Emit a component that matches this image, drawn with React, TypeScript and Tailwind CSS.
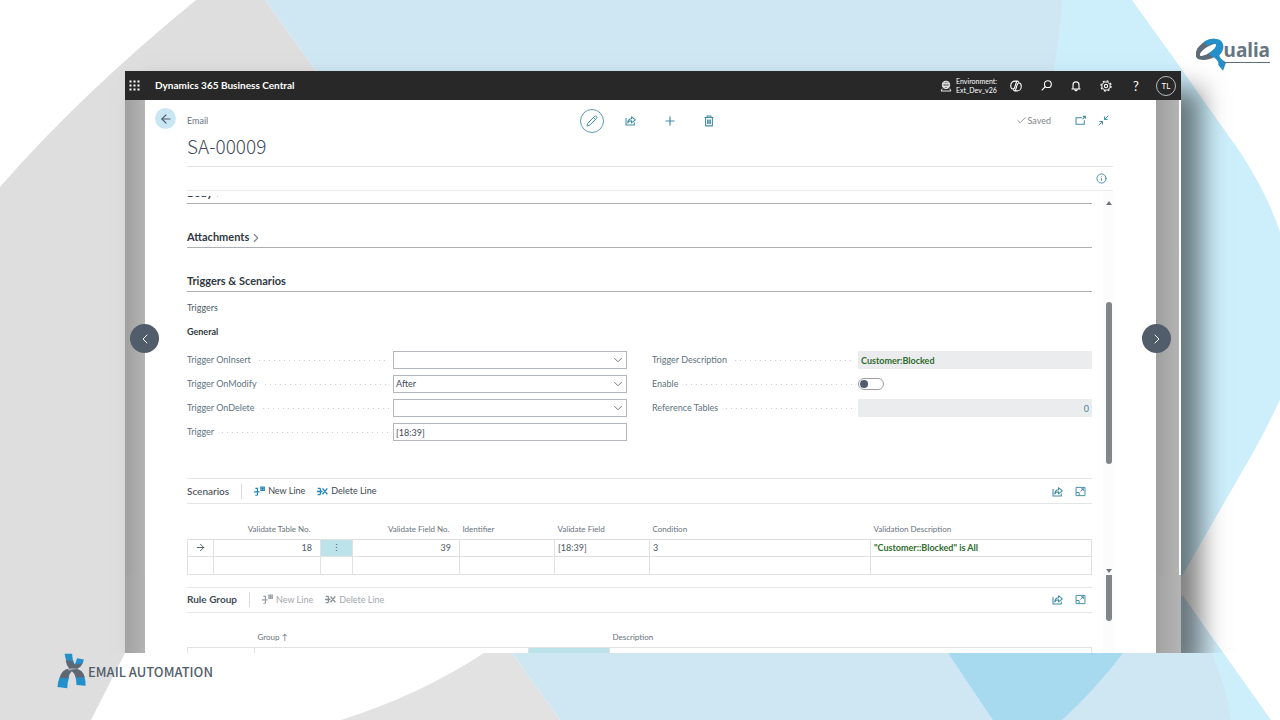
import React from "react";
import { ArrowLeft, ArrowRight, Check, ChevronDown, ChevronLeft, ChevronRight, Info, Pencil, Plus } from "lucide-react";

type IconProps = { className?: string };

const ShareIcon: React.FC<IconProps> = ({ className }) => (
  <svg viewBox="0 0 16 16" fill="none" stroke="currentColor" strokeWidth="1.5" className={className}>
    <path d="M1.500 4.500v10h12V11" />
    <path d="M4 11.500c.3-4 2.500-6 5.500-6V2.500l5.500 4.500-5.500 4.500V8.500c-2.500-.2-4.200 1-5.500 3z" strokeLinejoin="round" />
  </svg>
);

const TrashIcon: React.FC<IconProps> = ({ className }) => (
  <svg viewBox="0 0 16 16" fill="none" stroke="currentColor" strokeWidth="1.4" className={className}>
    <path d="M2 3.200h12M5.500 3V1.200h5V3M3.500 3.500v11h9v-11M6.200 6v6M8 6v6M9.800 6v6" />
  </svg>
);

const PopOutIcon: React.FC<IconProps> = ({ className }) => (
  <svg viewBox="0 0 16 16" fill="none" stroke="currentColor" strokeWidth="1.500" className={className}>
    <path d="M10 4H1.500v9.500h12V7.500M11 6l4-4M11.500 2h3.500v3.500" />
  </svg>
);

const CollapseIcon: React.FC<IconProps> = ({ className }) => (
  <svg viewBox="0 0 16 16" fill="none" stroke="currentColor" strokeWidth="1.400" className={className}>
    <path d="M15 1L9.500 6.500M9.500 2v4.500H14M1 15l5.500-5.500M2 9.500h4.500V14" />
  </svg>
);

const ExpandIcon: React.FC<IconProps> = ({ className }) => (
  <svg viewBox="0 0 16 16" fill="none" stroke="currentColor" strokeWidth="1.400" className={className}>
    <path d="M1.500 2h13v12h-13zM1.500 9.500H6V14M8 8l4-4M9 4h3.200v3.200" />
  </svg>
);

const NewLineIcon: React.FC<IconProps> = ({ className }) => (
  <svg viewBox="0 0 16 16" fill="none" stroke="currentColor" strokeWidth="1.700" className={className}>
    <path d="M2 3.500h4M0 8.500h8M2 13.500h3M5 3.500v10M10 1.500h5v5h-5zM12.500 2v4M10.500 4h4" />
  </svg>
);

const DeleteLineIcon: React.FC<IconProps> = ({ className }) => (
  <svg viewBox="0 0 16 16" fill="none" stroke="currentColor" strokeWidth="2" className={className}>
    <path d="M1 3.500h4M0 8h8M1 12.500h4M5 3.500v9M8 3.500l7 8.500M15 3.500L8 12" />
  </svg>
);

const WaffleIcon: React.FC<IconProps> = ({ className }) => (
  <svg viewBox="0 0 11 11" fill="currentColor" className={className}>
    {[0, 4, 8].map((y) => [0, 4, 8].map((x) => <rect key={`${x}-${y}`} x={x + 0.5} y={y + 0.5} width="2" height="2" />))}
  </svg>
);

const EnvironmentIcon: React.FC<IconProps> = ({ className }) => (
  <svg viewBox="0 0 16 16" fill="none" stroke="currentColor" strokeWidth="1.200" className={className}>
    <circle cx="8" cy="6.500" r="5" />
    <path d="M3.500 5h9M3.500 8.500h9M8 1.500v10M6 2c-1.200 3-1.200 6 0 9M10 2c1.200 3 1.200 6 0 9M3 11.500l-1.500 3.200h13L13 11.500" />
  </svg>
);

const CopilotIcon: React.FC<IconProps> = ({ className }) => (
  <svg viewBox="0 0 16 16" fill="none" stroke="currentColor" strokeWidth="1.400" strokeLinejoin="round" className={className}>
    <path d="M9.500 1.500H6.500C3.500 1.500 1 4 1 7.500 1 10.500 2 12 4 12c1.500 0 2-1 2.300-2L8.500 3c.3-1 .8-1.500 1.500-1.500 1 0 1.400 1 1.600 2.200" />
    <path d="M6.500 14.500h3c3 0 5.500-2.500 5.500-6C15 5.500 14 4 12 4c-1.500 0-2 1-2.300 2L7.500 13c-.3 1-.8 1.500-1.500 1.500-1 0-1.400-1-1.600-2.200" />
  </svg>
);

const SearchIcon: React.FC<IconProps> = ({ className }) => (
  <svg viewBox="0 0 16 16" fill="none" stroke="currentColor" strokeWidth="1.600" className={className}>
    <circle cx="10" cy="6" r="5" />
    <path d="M6.400 9.600L1 15" />
  </svg>
);

const BellIcon: React.FC<IconProps> = ({ className }) => (
  <svg viewBox="0 0 16 16" fill="none" stroke="currentColor" strokeWidth="1.500" className={className}>
    <path d="M4 12V6.500a4 4 0 0 1 8 0V12M2 12h12M6.500 12.500a1.500 1.800 0 0 0 3 0" />
  </svg>
);

const GearIcon: React.FC<IconProps> = ({ className }) => (
  <svg viewBox="0 0 16 16" fill="none" stroke="currentColor" className={className}>
    <circle cx="8" cy="8" r="5.500" strokeWidth="1.300" />
    <circle cx="8" cy="8" r="6.800" strokeWidth="1.600" strokeDasharray="2.670 2.670" />
    <circle cx="8" cy="8" r="2.200" strokeWidth="1.400" />
  </svg>
);

function Backdrop() {
  return (
    <svg viewBox="0 0 1280 720" preserveAspectRatio="none" className="absolute inset-0 h-full w-full" aria-hidden="true">
      <path d="M196 0H265L330 90V560L150 600L125 653L91 720H0V187Q80 95 196 0Z" fill="#dedede" />
      <path d="M1000 0H1132L1175 60L1240 152Q1268 195 1280 232V400Q1262 438 1243 470L1182 576L1130 640L1000 600Z" fill="#cdeefb" />
      <path d="M1183 596L1271 720H1150V596Z" fill="#cdeefb" />
      <path d="M265 0H1062Q1060 40 1050 90H330Z" fill="#cfe7f3" />
      <path d="M341 720Q420 695 484 653H512L560 720Z" fill="#e2e2e2" />
      <path d="M512 653H1212Q1227 690 1231 720H560Z" fill="#cfe7f3" />
      <path d="M1183 596L1214 642V653H1183Z" fill="#cfe7f3" />
      <path d="M948 653H1123Q1095 690 1062 720H993Z" fill="#a7daee" />
    </svg>
  );
}

function QualiaLogo() {
  return (
    <a href="#qualia" aria-label="Qualia" className="absolute top-[38px] right-[10px] flex items-start">
      <svg viewBox="44 54 90 105" className="h-[35px] w-[30px]">
        <path d="M100 57C86 54 72 62 58 74C42 88 40 106 47 115C58 124 86 120 104 108Z" fill="#5e6b78" />
        <path d="M68 66C86 54 112 52 122 66C131 80 124 96 114 106C115 116 127 122 134 128L125 152L111 135C113 124 106 120 97 111L84 104L96 68L76 78Z" fill="#2390cc" />
        <ellipse cx="80" cy="90" rx="29" ry="9" transform="rotate(-34 80 90)" fill="#fff" />
      </svg>
      <span className="-ml-[2px] border-b border-[#5e6b78] font-[Noto_Sans,sans-serif] text-[19px] leading-6 font-bold text-[#667582]">
        ualia
      </span>
    </a>
  );
}

function Footer() {
  return (
    <footer className="relative flex h-[67px] items-start pl-14">
      <svg viewBox="48 247 90 110" className="h-9 w-[31px]" aria-hidden="true">
        <path d="M72 249H95Q94 265 103 282L92 290Q76 280 72 249Z" fill="#2390cc" />
        <path d="M110 263L131 267Q128 282 114 292L98 290Q106 280 110 263Z" fill="#2390cc" />
        <path d="M57 320H86Q80 338 80 355L50 351Q51 335 57 320Z" fill="#2390cc" />
        <path d="M104 317H132Q137 332 136 347L108 345Q109 330 104 317Z" fill="#2390cc" />
        <path d="M75 270Q84 268 96 272Q99 281 105 282Q118 282 127 277Q123 290 110 296Q128 300 133 320Q120 324 106 320Q100 306 94 303Q86 310 84 322Q70 326 57 322Q62 298 86 294Q78 286 75 270Z" fill="#5d6873" />
        <path d="M82 295Q98 291 114 296Q98 295 84 301Z" fill="#a9b0b6" />
      </svg>
      <span className="ml-px font-[Noto_Sans_CJK_SC,sans-serif] text-[13px] leading-[38px] font-medium text-[#535e6b]">EMAIL AUTOMATION</span>
    </footer>
  );
}

function TopBar() {
  return (
    <header className="flex h-[29px] items-center bg-[#282828] pl-1 text-white">
      <button aria-label="App launcher" className="flex w-[26px]">
        <WaffleIcon className="h-[11px] w-[11px]" />
      </button>
      <span className="flex-1 text-[10px] font-bold">Dynamics 365 Business Central</span>
      <EnvironmentIcon className="mr-1 h-3 w-3" />
      <span className="mr-1 text-[7px] leading-[9px]">
        Environment:
        <br />
        Ext_Dev_v26
      </span>
      <button aria-label="Copilot" className="flex w-[30px] justify-center">
        <CopilotIcon className="h-3 w-3" />
      </button>
      <button aria-label="Search" className="flex w-[30px] justify-center">
        <SearchIcon className="h-[11px] w-[11px]" />
      </button>
      <button aria-label="Notifications" className="flex w-[30px] justify-center">
        <BellIcon className="h-3 w-3" />
      </button>
      <button aria-label="Settings" className="flex w-[30px] justify-center">
        <GearIcon className="h-3 w-3" />
      </button>
      <button aria-label="Help" className="w-[30px] text-[13px] leading-4">?</button>
      <button aria-label="Account" className="flex w-[30px] justify-center">
        <span className="flex h-5 w-5 items-center justify-center rounded-full border border-[#b8bcc0] text-[8px]">TL</span>
      </button>
    </header>
  );
}

function PageHeader() {
  return (
    <div className="flex pl-[10px] pr-[43px] pt-2">
      <button aria-label="Back" className="mr-[11px] flex h-[21px] w-[21px] items-center justify-center rounded-full bg-[#c9e6f2] text-[#505c6d]">
        <ArrowLeft className="h-[14px] w-[14px]" strokeWidth={2} />
      </button>
      <div className="flex-1 border-b border-[#e2e3e5] pb-2">
        <div className="grid h-[25px] grid-cols-[1fr_auto_1fr] items-center">
          <span className="text-[9px] text-[#6b7480]">Email</span>
          <div className="flex gap-[15px] text-[#3f8ba3]">
            <button aria-label="Edit" className="flex h-6 w-6 items-center justify-center rounded-full border border-[#5b9bb0]">
              <Pencil className="h-3 w-3" strokeWidth={2} />
            </button>
            <button aria-label="Share" className="flex h-6 w-6 items-center justify-center">
              <ShareIcon className="h-[11px] w-[11px]" />
            </button>
            <button aria-label="New" className="flex h-6 w-6 items-center justify-center">
              <Plus className="h-[14px] w-[14px]" strokeWidth={2} />
            </button>
            <button aria-label="Delete" className="flex h-6 w-6 items-center justify-center">
              <TrashIcon className="h-3 w-3" />
            </button>
          </div>
          <div className="flex items-center justify-end pr-1 text-[#3f8ba3]">
            <Check className="h-[11px] w-[11px] text-[#8a9098]" strokeWidth={2} />
            <span className="text-[9px] text-[#7f868e]">Saved</span>
            <button aria-label="Open in new window" className="ml-6">
              <PopOutIcon className="h-[11px] w-[11px]" />
            </button>
            <button aria-label="Collapse" className="ml-3">
              <CollapseIcon className="h-[11px] w-[11px]" />
            </button>
          </div>
        </div>
        <h1 className="font-[Noto_Sans_CJK_SC,sans-serif] text-[19px] leading-[25px] font-light text-[#3f4a58]">SA-00009</h1>
      </div>
    </div>
  );
}

function Leader() {
  return <span className="ml-2 h-px flex-1 bg-[linear-gradient(to_right,#cdd1d5_1px,transparent_1px)] bg-[length:5px_1px]" />;
}

interface FieldProps {
  id: string;
  label: string;
  children: React.ReactNode;
}

function Field({ id, label, children }: FieldProps) {
  return (
    <div className="flex h-[18px] items-center">
      <label htmlFor={id} className="flex w-[206px] items-center pr-1 text-[9px] text-[#5f7380]">
        {label}
        <Leader />
      </label>
      <div className="relative h-full flex-1">{children}</div>
    </div>
  );
}

function SelectField({ id, label, value }: { id: string; label: string; value: string }) {
  return (
    <Field id={id} label={label}>
      <select id={id} defaultValue={value} className="block h-full w-full appearance-none border border-[#b3b7bb] bg-white px-[2px] text-[9px] text-[#3f4a58]">
        <option value=""></option>
        <option>Before</option>
        <option>After</option>
      </select>
      <ChevronDown className="pointer-events-none absolute top-[2px] right-[2px] h-[14px] w-[14px] text-[#5f6972]" strokeWidth={1.5} />
    </Field>
  );
}

function ScrollTrack({ children }: { children: React.ReactNode }) {
  return <div className="ml-[11px] flex w-[11px] flex-col items-center bg-[#fcfcfc]">{children}</div>;
}

function ScrollArrow({ className }: IconProps) {
  return (
    <svg viewBox="0 0 6 4" fill="#70767b" className={className} aria-hidden="true">
      <path d="M3 0L6 4H0Z" />
    </svg>
  );
}

interface LinesToolbarProps {
  title: string;
  disabled?: boolean;
}

function LinesToolbar({ title, disabled }: LinesToolbarProps) {
  return (
    <div className="flex h-[26px] items-center border-y border-[#e4e5e7]">
      <h3 className={`border-r border-[#d6d8da] pr-3 text-[10px] text-[#3f4d59] ${disabled ? "font-bold" : "font-medium"}`}>{title}</h3>
      <button
        disabled={disabled}
        className={`ml-3 flex items-center gap-[3px] text-[9px] ${disabled ? "text-[#a3a8ad]" : "text-[#3c4650]"}`}
      >
        <NewLineIcon className={`h-[11px] w-[11px] ${disabled ? "text-[#9a9fa4]" : "text-[#2486b8]"}`} />
        New Line
      </button>
      <button
        disabled={disabled}
        className={`ml-3 flex items-center gap-[3px] text-[9px] ${disabled ? "text-[#a3a8ad]" : "text-[#3c4650]"}`}
      >
        <DeleteLineIcon className={`h-[11px] w-[11px] ${disabled ? "text-[#8b9095]" : "text-[#2486b8]"}`} />
        Delete Line
      </button>
      <div className="ml-auto flex gap-3 pr-[6px] text-[#3f8ba3]">
        <button aria-label={`Share ${title}`}>
          <ShareIcon className="h-[11px] w-[11px]" />
        </button>
        <button aria-label={`Expand ${title}`}>
          <ExpandIcon className="h-[11px] w-[11px]" />
        </button>
      </div>
    </div>
  );
}

function ScenariosTable() {
  const cell = "border border-[#dfe1e3] px-[3px]";
  return (
    <table className="w-full table-fixed border-collapse text-left text-[9px] text-[#4d5863]">
      <colgroup>
        <col className="w-[26px]" />
        <col className="w-[107px]" />
        <col className="w-8" />
        <col className="w-[107px]" />
        <col className="w-[95px]" />
        <col className="w-[95px]" />
        <col className="w-[221px]" />
        <col />
      </colgroup>
      <thead>
        <tr className="h-[35px] align-bottom text-[8px] leading-[19px] text-[#68727b]">
          <th />
          <th className="pr-[10px] text-right font-normal whitespace-nowrap">Validate Table No.</th>
          <th />
          <th className="pr-[10px] text-right font-normal whitespace-nowrap">Validate Field No.</th>
          <th className="pl-[3px] font-normal">Identifier</th>
          <th className="pl-[3px] font-normal">Validate Field</th>
          <th className="pl-[3px] font-normal">Condition</th>
          <th className="pl-[3px] font-normal">Validation Description</th>
        </tr>
      </thead>
      <tbody className="leading-4">
        <tr className="h-[17px]">
          <td className={cell}>
            <ArrowRight className="mx-auto h-[11px] w-[11px]" strokeWidth={2} />
          </td>
          <td className="border border-[#dfe1e3] pr-2 text-right">18</td>
          <td className="border border-[#dfe1e3] bg-[#bce3ea] text-center">⋮</td>
          <td className="border border-[#dfe1e3] pr-2 text-right">39</td>
          <td className={cell} />
          <td className={cell}>[18:39]</td>
          <td className={cell}>3</td>
          <td className="border border-[#dfe1e3] px-[3px] font-bold text-[#2e6b2c]">"Customer::Blocked" is All</td>
        </tr>
        <tr className="h-[18px]">
          {Array.from({ length: 8 }, (_, i) => (
            <td key={i} className={cell} />
          ))}
        </tr>
      </tbody>
    </table>
  );
}

function RuleGroupTable() {
  return (
    <table className="w-full table-fixed border-collapse text-left text-[8px] text-[#68727b]">
      <colgroup>
        <col className="w-[67px]" />
        <col className="w-[274px]" />
        <col className="w-[81px]" />
        <col />
      </colgroup>
      <thead>
        <tr className="h-[35px] align-bottom leading-[19px]">
          <th />
          <th className="pl-[3px] font-normal">Group ↑</th>
          <th />
          <th className="pl-[3px] font-normal">Description</th>
        </tr>
      </thead>
      <tbody>
        <tr className="h-[17px]">
          <td className="border border-[#dfe1e3]" />
          <td className="border border-[#dfe1e3]" />
          <td className="border border-[#dfe1e3] bg-[#bce3ea]" />
          <td className="border border-[#dfe1e3]" />
        </tr>
      </tbody>
    </table>
  );
}

function SideRail() {
  return (
    <div className="flex flex-1 flex-col">
      <div className="h-[475px] bg-linear-to-r from-[#9f9f9f] to-[#b4b4b5]" />
      <div className="flex-1 bg-linear-to-r from-[#a2a2a2] to-[#b3b3b3]" />
    </div>
  );
}

function EmailPage() {
  return (
    <main className="min-w-0 flex-1 bg-white">
      <PageHeader />
      <div className="ml-[42px] mr-[43px] flex h-6 items-center justify-end border-b border-[#ebecee] pr-[6px]">
        <button aria-label="Details" className="text-[#3f8ba3]">
          <Info className="h-[11px] w-[11px]" strokeWidth={2} />
        </button>
      </div>

      {/* Record details */}
      <div className="flex pl-[42px] pr-[42px]">
        <div className="min-w-0 flex-1 pt-[5px]">
          <div className="flex h-2 items-end overflow-hidden border-b border-[#adb0b3]">
            <h2 className="flex items-center text-[11px] leading-5 font-bold text-[#2f3942]">
              Body
              <ChevronRight className="h-3 w-3 text-[#7b858e]" />
            </h2>
          </div>
          <h2 className="mt-6 flex h-5 items-center border-b border-[#adb0b3] text-[11px] font-bold text-[#2f3942]">
            Attachments
            <ChevronRight className="h-[14px] w-[14px] text-[#7b858e]" />
          </h2>
          <h2 className="mt-6 flex h-5 items-center border-b border-[#adb0b3] text-[11px] font-bold text-[#2f3942]">
            Triggers &amp; Scenarios
          </h2>
          <p className="mt-2 text-[9px] leading-4 text-[#505c66]">Triggers</p>
          <h3 className="mt-2 text-[9px] leading-4 font-bold text-[#2f3942]">General</h3>

          <div className="mt-[11px] grid grid-cols-2 gap-x-[25px]">
            <div className="flex flex-col gap-[6px]">
              <SelectField id="on-insert" label="Trigger OnInsert" value="" />
              <SelectField id="on-modify" label="Trigger OnModify" value="After" />
              <SelectField id="on-delete" label="Trigger OnDelete" value="" />
              <Field id="trigger" label="Trigger">
                <input id="trigger" defaultValue="[18:39]" className="block h-full w-full border border-[#b3b7bb] bg-white px-[2px] text-[9px] text-[#3f4a58]" />
              </Field>
            </div>
            <div className="flex flex-col gap-[6px]">
              <Field id="description" label="Trigger Description">
                <input id="description" readOnly value="Customer:Blocked" className="block h-full w-full bg-[#ebecee] px-[3px] text-[9px] font-bold text-[#2e6b2c]" />
              </Field>
              <Field id="enable" label="Enable">
                <input
                  id="enable"
                  type="checkbox"
                  role="switch"
                  className="mt-[3px] flex h-3 w-[26px] appearance-none items-center rounded-full border border-[#9b9fa4] bg-white px-px before:h-2 before:w-2 before:rounded-full before:bg-[#505c6d]"
                />
              </Field>
              <Field id="references" label="Reference Tables">
                <input id="references" readOnly value="0" className="block h-full w-full bg-[#ebecee] px-[3px] text-right text-[9px] text-[#3f8ba3]" />
              </Field>
            </div>
          </div>

          <div className="mt-[37px]">
            <LinesToolbar title="Scenarios" />
            <ScenariosTable />
          </div>
        </div>
        <ScrollTrack>
          <ScrollArrow className="mt-[10px] h-1 w-[6px]" />
          <span className="mt-[97px] h-[162px] w-[6px] rounded-full bg-[#80868a]" />
          <ScrollArrow className="mt-auto mb-[2px] h-1 w-[6px] rotate-180" />
        </ScrollTrack>
      </div>

      {/* Rule group lines */}
      <div className="flex pl-[42px] pr-[42px]">
        <div className="min-w-0 flex-1 pt-3">
          <LinesToolbar title="Rule Group" disabled />
          <RuleGroupTable />
        </div>
        <ScrollTrack>
          <span className="h-[46px] w-[6px] rounded-b-full bg-[#80868a]" />
        </ScrollTrack>
      </div>
    </main>
  );
}

export default function App() {
  return (
    <div className="relative flex h-screen flex-col overflow-hidden bg-white font-[Lato,Open_Sans,sans-serif]">
      <Backdrop />
      <div className="relative min-h-0 flex-1 overflow-hidden pt-[71px] pr-[99px] pl-[125px]">
        <div className="relative flex h-full flex-col shadow-[20px_18px_24px_rgba(0,0,0,0.5)]">
          <TopBar />
          <div className="flex min-h-0 flex-1 overflow-hidden">
            <div className="flex w-5">
              <SideRail />
            </div>
            <EmailPage />
            <div className="flex w-[25px]">
              <SideRail />
              <div className="flex w-[2px] flex-col bg-[#b3b3b3]">
                <div className="h-[475px] bg-white" />
              </div>
            </div>
          </div>
          <button aria-label="Previous" className="absolute top-[253px] left-[5px] flex h-[29px] w-[29px] items-center justify-center rounded-full bg-[#525d6b] text-white">
            <ChevronLeft className="h-4 w-4" strokeWidth={1.5} />
          </button>
          <button aria-label="Next" className="absolute top-[253px] right-[10px] flex h-[29px] w-[29px] items-center justify-center rounded-full bg-[#525d6b] text-white">
            <ChevronRight className="h-4 w-4" strokeWidth={1.5} />
          </button>
        </div>
      </div>
      <Footer />
      <QualiaLogo />
    </div>
  );
}
